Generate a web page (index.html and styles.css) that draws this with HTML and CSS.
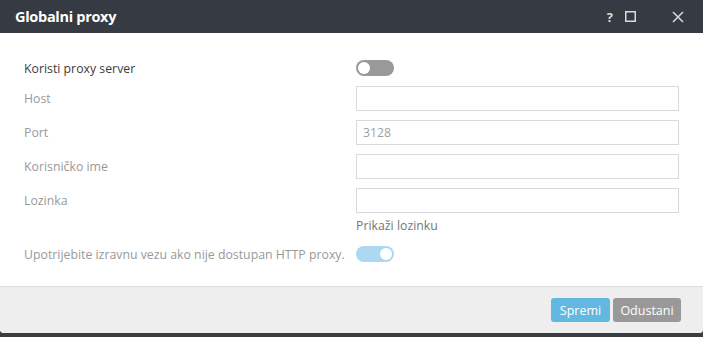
FILE: index.html
```html
<!DOCTYPE html>
<html>
<head>
<meta charset="utf-8">
<link rel="stylesheet" href="styles.css">
</head>
<body>
<div class="modal">
  <div class="header">
    <div class="title">Globalni proxy</div>
    <div class="tools">
      <span class="help">?</span>
      <svg class="max" width="11" height="11" viewBox="0 0 11 11"><rect x="0.75" y="0.75" width="9.5" height="9.5" fill="none" stroke="#d8dadd" stroke-width="1.5"/></svg>
      <svg class="close" width="12" height="12" viewBox="0 0 12 12"><path d="M1 1L11 11M11 1L1 11" stroke="#d8dadd" stroke-width="1.5" fill="none"/></svg>
    </div>
  </div>
  <div class="body">
    <div class="row row-first">
      <div class="label dark">Koristi proxy server</div>
      <div class="field"><span class="toggle off"><span class="knob"></span></span></div>
    </div>
    <div class="row">
      <div class="label">Host</div>
      <div class="field"><div class="input"></div></div>
    </div>
    <div class="row">
      <div class="label">Port</div>
      <div class="field"><div class="input"><span class="ph">3128</span></div></div>
    </div>
    <div class="row">
      <div class="label">Korisničko ime</div>
      <div class="field"><div class="input"></div></div>
    </div>
    <div class="row">
      <div class="label">Lozinka</div>
      <div class="field"><div class="input"></div></div>
    </div>
    <div class="row row-show">
      <div class="label"></div>
      <div class="field show">Prikaži lozinku</div>
    </div>
    <div class="row row-last">
      <div class="label">Upotrijebite izravnu vezu ako nije dostupan HTTP proxy.</div>
      <div class="field"><span class="toggle on"><span class="knob"></span></span></div>
    </div>
  </div>
  <div class="footer">
    <button class="btn save">Spremi</button>
    <button class="btn cancel">Odustani</button>
  </div>
</div>
</body>
</html>
```
FILE: styles.css
```css
html, body {
  margin: 0;
  padding: 0;
}
body {
  background: #3a3d42;
  width: 703px;
  height: 337px;
  overflow: hidden;
  font-family: "Open Sans", "Noto Sans", sans-serif;
}
.modal {
  width: 703px;
  height: 333px;
  background: #fff;
  border-radius: 0 0 4px 4px;
  overflow: hidden;
  display: flex;
  flex-direction: column;
}
.header {
  height: 33px;
  background: #363a42;
  display: flex;
  align-items: center;
  justify-content: space-between;
  padding: 0 19px 0 15px;
  flex-shrink: 0;
}
.title {
  color: #fff;
  font-weight: 700;
  font-size: 14.5px;
  letter-spacing: -0.3px;
}
.tools {
  display: flex;
  align-items: center;
}
.help {
  color: #d8dadd;
  font-weight: 700;
  font-size: 13px;
  margin-right: 12px;
}
.max {
  margin-right: 36px;
}
.body {
  flex: 1;
  padding: 25px 24px 0 24px;
  display: flex;
  flex-direction: column;
}
.row {
  display: grid;
  grid-template-columns: 332px 323px;
  align-items: center;
  margin-bottom: 9px;
}
.row-first {
  height: 20px;
  margin-bottom: 8px;
}
.row-show {
  margin-top: -9px;
  margin-bottom: 0;
  height: 24px;
}
.row-last {
  margin-top: 7px;
  height: 20px;
}
.label {
  font-size: 12.3px;
  color: #999999;
}
.label.dark {
  color: #3c3c3c;
}
.field {
  display: flex;
  align-items: center;
}
.input {
  box-sizing: border-box;
  width: 323px;
  height: 25px;
  border: 1px solid #d9d9d9;
  display: flex;
  align-items: center;
  padding-left: 6px;
}
.ph {
  font-size: 12.3px;
  color: #a0a0a0;
}
.show {
  font-size: 12.3px;
  color: #777;
}
.toggle {
  box-sizing: border-box;
  width: 38px;
  height: 16px;
  border-radius: 8px;
  display: flex;
  align-items: center;
  padding: 0 2px;
}
.toggle.off {
  background: #999;
  justify-content: flex-start;
}
.toggle.on {
  background: #acd9f1;
  justify-content: flex-end;
}
.knob {
  width: 12px;
  height: 12px;
  border-radius: 50%;
  background: #fff;
}
.footer {
  height: 46px;
  background: #eeeeee;
  border-top: 1px solid #dddddd;
  display: flex;
  justify-content: flex-end;
  align-items: center;
  padding-right: 22px;
  gap: 3px;
  flex-shrink: 0;
}
.btn {
  height: 24px;
  border: none;
  border-radius: 3px;
  color: #fff;
  font-family: "Open Sans", "Noto Sans", sans-serif;
  font-size: 12.5px;
  padding: 0;
}
.save {
  width: 59px;
  background: #62b8e0;
}
.cancel {
  width: 68px;
  background: #999999;
}
```
